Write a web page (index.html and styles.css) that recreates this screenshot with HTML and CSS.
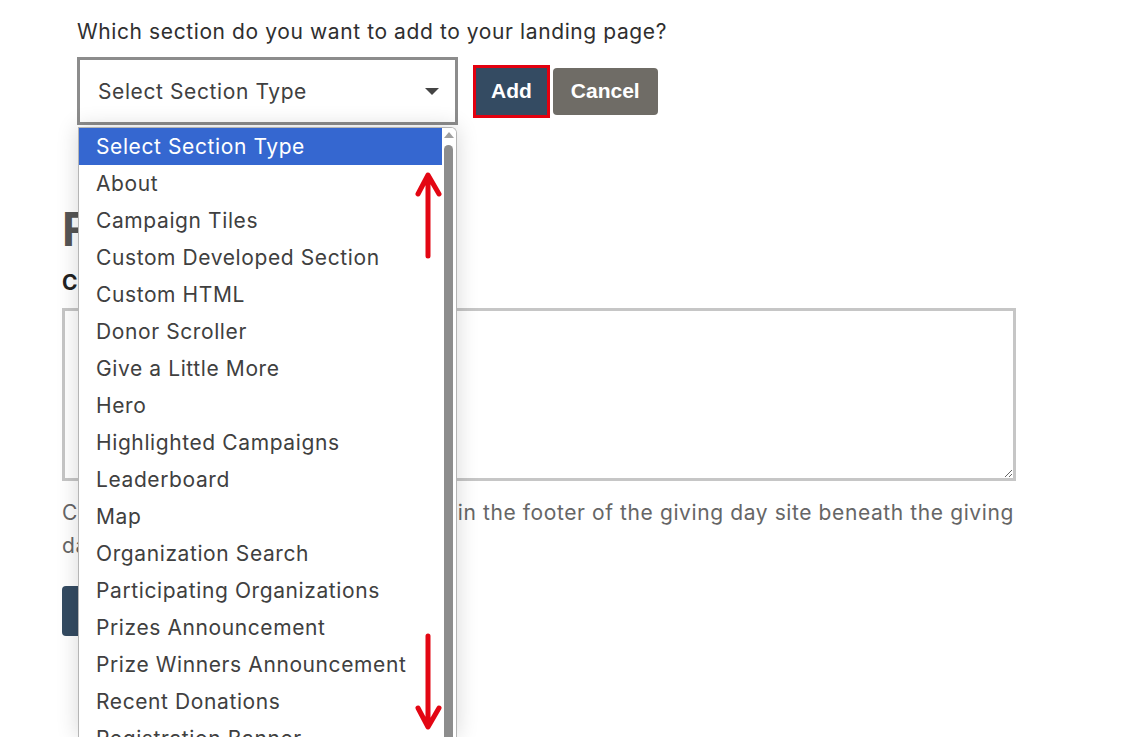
FILE: index.html
```html
<!DOCTYPE html>
<html>
<head>
    <title>Landing Page Sections</title>
    <link rel="stylesheet" href="styles.css">
</head>
<body>
    <div class="page">
        <div class="add-section">
            <p class="prompt">Which section do you want to add to your landing page?</p>
            <div class="add-row">
                <div class="select-wrap">
                    <div class="select">
                        <span>Select Section Type</span>
                        <span class="caret"></span>
                    </div>

                    <!-- open list of the select -->
                    <div class="dropdown">
                        <ul class="options">
                            <li class="selected">Select Section Type</li>
                            <li>About</li>
                            <li>Campaign Tiles</li>
                            <li>Custom Developed Section</li>
                            <li>Custom HTML</li>
                            <li>Donor Scroller</li>
                            <li>Give a Little More</li>
                            <li>Hero</li>
                            <li>Highlighted Campaigns</li>
                            <li>Leaderboard</li>
                            <li>Map</li>
                            <li>Organization Search</li>
                            <li>Participating Organizations</li>
                            <li>Prizes Announcement</li>
                            <li>Prize Winners Announcement</li>
                            <li>Recent Donations</li>
                            <li>Registration Banner</li>
                            <li>Sponsors</li>
                        </ul>
                        <div class="scrollbar">
                            <span class="scroll-up"></span>
                            <span class="scroll-thumb"></span>
                        </div>
                    </div>
                </div>
                <button type="button" class="btn btn-add">Add</button>
                <button type="button" class="btn btn-cancel">Cancel</button>
            </div>
        </div>

        <div class="footer-settings">
            <h1>Footer</h1>
            <label for="footerContent">Content</label>
            <textarea id="footerContent"></textarea>
            <p class="help">Content added here will be displayed in the footer of the giving day site beneath the giving day logo.</p>
            <button type="button" class="btn btn-save">Save</button>
        </div>
    </div>

    <!-- scroll hint arrows -->
    <svg class="hint-arrows" width="1128" height="737" viewBox="0 0 1128 737">
        <g fill="none" stroke="#e30613" stroke-width="5" stroke-linecap="round" stroke-linejoin="round">
            <path d="M428 256 L428 176 M418 194 L428 175 L439 194"/>
            <path d="M428 636 L428 726 M418 708 L428 727 L439 708"/>
        </g>
    </svg>
</body>
</html>
```

FILE: styles.css
```css
html, body {
    height: 100%;
}

body {
    margin: 0;
    font-family: Inter, "Liberation Sans", sans-serif;
    letter-spacing: 0.6px;
    color: #333;
    background: #fff;
}

.page {
    padding: 0 0 0 62px;
    width: 954px;
}

.add-section {
    padding: 0 15px;
}

.prompt {
    margin: 0;
    padding-top: 16px;
    font-size: 21px;
    line-height: 32px;
    color: #2f2f2f;
}

.add-row {
    display: flex;
    align-items: center;
    gap: 6px;
    margin-top: 9px;
}

.select-wrap {
    position: relative;
    margin-right: 12px;
}

.select {
    box-sizing: border-box;
    width: 381px;
    height: 68px;
    border: 3px solid #8c8c8c;
    padding: 0 16px 0 18px;
    display: flex;
    align-items: center;
    justify-content: space-between;
    font-size: 21px;
    color: #404040;
}

.caret {
    width: 0;
    height: 0;
    border-left: 7px solid transparent;
    border-right: 7px solid transparent;
    border-top: 7px solid #444;
}

.dropdown {
    position: absolute;
    left: 1px;
    top: 70px;
    width: 379px;
    height: 610px;
    background: #fff;
    border: 1px solid #b5b5b5;
    border-bottom: none;
    box-sizing: border-box;
    border-radius: 0 6px 0 0;
    box-shadow: 0 0 22px rgba(0, 0, 0, 0.16);
    overflow: hidden;
    z-index: 2;
}

.options {
    list-style: none;
    margin: 0;
    padding: 0;
    margin-right: 14px;
}

.options li {
    height: 37px;
    line-height: 37px;
    padding-left: 17px;
    font-size: 21px;
    color: #404040;
    white-space: nowrap;
}

.options li.selected {
    background: #3567d0;
    color: #fff;
}

.scrollbar {
    position: absolute;
    top: 0;
    right: 0;
    width: 14px;
    bottom: 0;
    background: #fff;
}

.scroll-up {
    position: absolute;
    top: 4px;
    left: 2px;
    width: 0;
    height: 0;
    border-left: 5px solid transparent;
    border-right: 5px solid transparent;
    border-bottom: 6px solid #a0a0a0;
}

.scroll-thumb {
    position: absolute;
    top: 17px;
    left: 2px;
    width: 9px;
    bottom: 0;
    background: #8d8d8d;
    border-radius: 5px 5px 0 0;
}

.btn {
    font-family: "Liberation Sans", Arial, sans-serif;
    font-weight: bold;
    font-size: 21px;
    letter-spacing: 0;
    color: #fff;
    border: none;
    height: 47px;
    padding: 0 18px;
    border-radius: 4px;
    cursor: pointer;
}

.btn-add {
    background: #344b62;
    border-radius: 0;
    outline: 3px solid #e3000f;
    padding: 0 15px;
}

.btn-cancel {
    background: #6f6c66;
}

.footer-settings {
    padding-top: 76px;
}

.footer-settings h1 {
    margin: 0;
    font-size: 46px;
    line-height: 56px;
    font-weight: bold;
    letter-spacing: 0;
    color: #555;
}

.footer-settings label {
    display: block;
    margin-top: 13px;
    font-size: 21px;
    font-weight: bold;
    color: #222;
}

.footer-settings textarea {
    display: block;
    box-sizing: border-box;
    width: 954px;
    height: 173px;
    margin-top: 13px;
    border: 3px solid #c6c6c6;
    font-size: 20px;
}

.help {
    margin: 15px 0 0;
    font-size: 21px;
    line-height: 33px;
    color: #666;
}

.btn-save {
    margin-top: 24px;
    height: 50px;
    width: 120px;
    background: #344b62;
}

.hint-arrows {
    position: absolute;
    left: 0;
    top: 0;
    z-index: 3;
    pointer-events: none;
}
```
